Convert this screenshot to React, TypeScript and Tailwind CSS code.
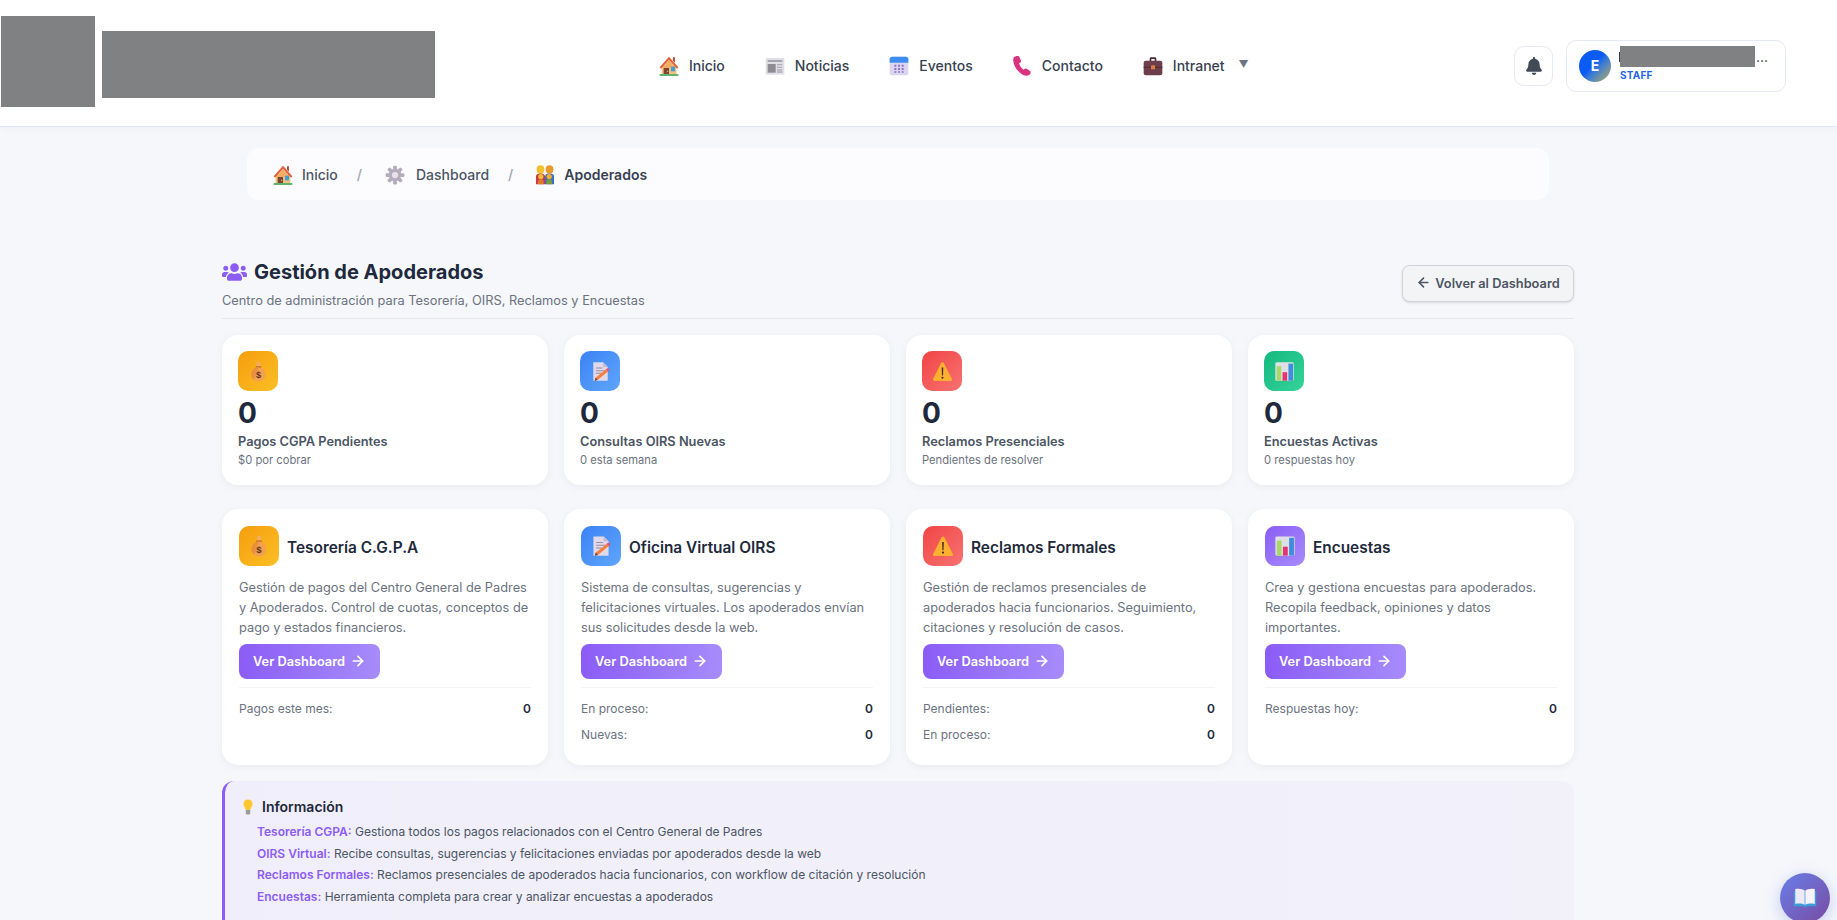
import type { ReactNode } from 'react'
import { FaBell, FaUsers } from 'react-icons/fa'
import { ArrowLeft, ArrowRight } from 'lucide-react'

// emoji-like icons, drawn because no emoji font is installed
function HouseIcon({ className }: { className: string }) {
  return (
    <svg viewBox="1 1 30 30" className={className}>
      <path d="M5 15h22v14H5z" fill="#f3c07b" />
      <path d="M22 3h3v8l-3-3z" fill="#b4523a" />
      <path d="M16 2 2 18l2 2L16 7l12 13 2-2z" fill="#e0603a" />
      <path d="M16 7 6 19h20z" fill="#f3ad61" />
      <path d="M8 19h8v10H8z" fill="#7d4533" />
      <circle cx="14" cy="24" r="1" fill="#f3c07b" />
      <path d="M19 17h6v7h-6z" fill="#3f9fd8" />
      <path d="M2 28h28v3H2z" fill="#5fb56b" />
    </svg>
  )
}

function NewsIcon({ className }: { className: string }) {
  return (
    <svg viewBox="1 1 30 30" className={className}>
      <path d="M2 4h28v25H2z" fill="#e1dfe6" />
      <path d="M5 7h22v3H5z" fill="#a9a5b0" />
      <path d="M5 13h12v13H5z" fill="#8f8c94" />
      <path d="M19 13h8v2h-8zM19 17h8v2h-8zM19 21h8v2h-8zM19 24h8v2h-8z" fill="#b4acbc" />
    </svg>
  )
}

function CalendarIcon({ className }: { className: string }) {
  return (
    <svg viewBox="1 1 30 30" className={className}>
      <rect x="2" y="2" width="28" height="28" rx="4" fill="#dcd5ee" />
      <path d="M2 11V6a4 4 0 0 1 4-4h20a4 4 0 0 1 4 4v5z" fill="#3f8cf0" />
      <path
        d="M9 14h3v3H9zM14.5 14h3v3h-3zM20 14h3v3h-3zM9 19h3v3H9zM14.5 19h3v3h-3zM20 19h3v3h-3zM14.5 24h3v2h-3zM9 24h3v2H9zM20 24h3v2h-3z"
        fill="#8a74c9"
      />
    </svg>
  )
}

function PhoneIcon({ className }: { className: string }) {
  return (
    <svg viewBox="1 1 30 30" className={className}>
      <path
        d="M5 2c-2 1-2.500 4-2 7 1 7 6 16 14 20 3 1.500 6 2 9 1 2-.7 3-3 3-4.500 0-1-.5-1.500-1-2l-5-3.500c-1-.7-2-.5-3 .3l-1.500 1.300c-3-1.500-6-6-7-10l2-1c1-.5 1.300-1.500 1-2.500L12 2.500C11.500 1 10 .5 9 .7z"
        fill="#d9327f"
      />
    </svg>
  )
}

function BriefcaseIcon({ className }: { className: string }) {
  return (
    <svg viewBox="1 1 30 30" className={className}>
      <path d="M11 9V5a2 2 0 0 1 2-2h6a2 2 0 0 1 2 2v4h-2.500V5.500h-5V9z" fill="#4b2d35" />
      <rect x="2" y="8" width="28" height="22" rx="3" fill="#6d3f4a" />
      <path d="M2 17h28v2H2z" fill="#57303a" />
      <rect x="13" y="15" width="6" height="6" rx="1" fill="#d6803c" />
    </svg>
  )
}

function GearIcon({ className }: { className: string }) {
  return (
    <svg viewBox="0 0 32 32" className={className}>
      <g fill="#b4acbc">
        <circle cx="16" cy="16" r="10" />
        <rect x="13" y="1" width="6" height="30" rx="2" />
        <rect x="13" y="1" width="6" height="30" rx="2" transform="rotate(45 16 16)" />
        <rect x="13" y="1" width="6" height="30" rx="2" transform="rotate(90 16 16)" />
        <rect x="13" y="1" width="6" height="30" rx="2" transform="rotate(135 16 16)" />
      </g>
      <circle cx="16" cy="16" r="5" fill="#e6e1ea" />
    </svg>
  )
}

function FamilyIcon({ className }: { className: string }) {
  return (
    <svg viewBox="1 0 30 31" className={className}>
      <ellipse cx="9" cy="7" rx="6" ry="6.5" fill="#f5c02e" />
      <ellipse cx="23" cy="7" rx="6" ry="6.5" fill="#e99a2b" />
      <path d="M2 18a7 5 0 0 1 14 0v12H2z" fill="#c93a4d" />
      <path d="M16 18a7 5 0 0 1 14 0v12H16z" fill="#3b6fc4" />
      <circle cx="9.5" cy="18" r="4" fill="#f5c02e" />
      <circle cx="22.5" cy="18" r="4" fill="#f5b02e" />
      <path d="M5 30v-4a4.500 4 0 0 1 9 0v4z" fill="#e07a2c" />
      <path d="M18 30v-4a4.500 4 0 0 1 9 0v4z" fill="#7a9c3a" />
    </svg>
  )
}

function MoneyBagIcon({ className }: { className: string }) {
  return (
    <svg viewBox="0 0 32 32" className={className}>
      <circle cx="16" cy="4.5" r="3.5" fill="#f3ad61" />
      <path d="M12.500 8h7l1 3h-9z" fill="#b5672e" />
      <circle cx="16" cy="20.5" r="11" fill="#f3a14f" />
      <path d="M16 9.500a11 11 0 0 0-8 18.600c4-3 5-11 8-18.600z" fill="#e98f3d" />
      <text x="16" y="26" textAnchor="middle" fontSize="14" fontWeight="700" fill="#5b3322" fontFamily="Liberation Sans, sans-serif">$</text>
    </svg>
  )
}

function DocPencilIcon({ className }: { className: string }) {
  return (
    <svg viewBox="0 0 32 32" className={className}>
      <path d="M5 2h15l7 7v21H5z" fill="#e1d8ec" />
      <path d="M20 2l7 7h-7z" fill="#c4b8d2" />
      <path d="M9 10h10v1.500H9zM9 14h14v1.500H9zM9 18h9v1.500H9z" fill="#998ea4" />
      <path d="M7 30l1.500-4.500L24 13l3 3.500L11.500 29z" fill="#f4803a" />
      <path d="M24 13l1.500-1.300c1-.8 1.800-.8 2.700 0l.6.7c.8 1 .7 1.900-.3 2.700L27 16.500z" fill="#f0506a" />
      <path d="M7 30l1.500-4.500 3 3.500z" fill="#5b4a52" />
    </svg>
  )
}

function WarningIcon({ className }: { className: string }) {
  return (
    <svg viewBox="0 0 32 32" className={className}>
      <path d="M16 2c1 0 1.800.5 2.300 1.500l12 24c.8 1.500-.3 3-1.800 3H3.500c-1.500 0-2.600-1.500-1.800-3l12-24C14.200 2.500 15 2 16 2z" fill="#ffb02e" />
      <path d="M14.800 10h2.400l-.4 12h-1.600z" fill="#402a32" />
      <circle cx="16" cy="25.500" r="1.600" fill="#402a32" />
    </svg>
  )
}

function ChartIcon({ className }: { className: string }) {
  return (
    <svg viewBox="0 0 32 32" className={className}>
      <rect x="2" y="2" width="28" height="28" rx="2" fill="#e1dfe6" />
      <path d="M4 8h7v22H4z" fill="#a6d86a" />
      <path d="M13 17h7v13h-7z" fill="#e5336d" />
      <path d="M22 4h7v26h-7z" fill="#3f8cdf" />
    </svg>
  )
}

function BulbIcon({ className }: { className: string }) {
  return (
    <svg viewBox="0 0 20 32" className={className}>
      <path d="M10 1C4.500 1 1 5 1 10c0 5 4 7 4.500 12h9C15 17 19 15 19 10c0-5-3.500-9-9-9z" fill="#fcc72e" />
      <path d="M5.500 22h9v6a3 3 0 0 1-3 3h-3a3 3 0 0 1-3-3z" fill="#9b9b9b" />
    </svg>
  )
}

function BookIcon({ className }: { className: string }) {
  return (
    <svg viewBox="0 0 32 32" className={className}>
      <path d="M1 7h30v20H18l-2 1.500L14 27H1z" fill="#3f9bd8" />
      <path d="M3 4c5-1 10 0 12.500 2v19C13 23.500 8 23 3 24z" fill="#efe9f7" />
      <path d="M29 4c-5-1-10 0-12.500 2v19c2.500-1.500 7.500-2 12.500-1z" fill="#f6f2fb" />
    </svg>
  )
}

const NAV: { label: string; icon: ReactNode; space: string }[] = [
  { label: 'Inicio', icon: <HouseIcon className="w-5 h-5" />, space: 'mr-10' },
  { label: 'Noticias', icon: <NewsIcon className="w-5 h-5" />, space: 'mr-10' },
  { label: 'Eventos', icon: <CalendarIcon className="w-5 h-5" />, space: 'mr-[39px]' },
  { label: 'Contacto', icon: <PhoneIcon className="w-5 h-5" />, space: 'mr-10' },
  { label: 'Intranet', icon: <BriefcaseIcon className="w-5 h-5" />, space: 'mr-[14px]' },
]

const STATS = [
  { icon: MoneyBagIcon, bg: 'bg-gradient-to-br from-[#f59e0b] to-[#fbbf24]', value: '0', label: 'Pagos CGPA Pendientes', sub: '$0 por cobrar' },
  { icon: DocPencilIcon, bg: 'bg-gradient-to-br from-[#3b82f6] to-[#60a5fa]', value: '0', label: 'Consultas OIRS Nuevas', sub: '0 esta semana' },
  { icon: WarningIcon, bg: 'bg-gradient-to-br from-[#ef4444] to-[#f87171]', value: '0', label: 'Reclamos Presenciales', sub: 'Pendientes de resolver' },
  { icon: ChartIcon, bg: 'bg-gradient-to-br from-[#10b981] to-[#34d399]', value: '0', label: 'Encuestas Activas', sub: '0 respuestas hoy' },
]

const MODULES = [
  {
    icon: MoneyBagIcon,
    bg: 'bg-gradient-to-br from-[#f59e0b] to-[#fbbf24]',
    title: 'Tesorería C.G.P.A',
    desc: 'Gestión de pagos del Centro General de Padres y Apoderados. Control de cuotas, conceptos de pago y estados financieros.',
    rows: [{ label: 'Pagos este mes:', value: '0' }],
  },
  {
    icon: DocPencilIcon,
    bg: 'bg-gradient-to-br from-[#3b82f6] to-[#60a5fa]',
    title: 'Oficina Virtual OIRS',
    desc: 'Sistema de consultas, sugerencias y felicitaciones virtuales. Los apoderados envían sus solicitudes desde la web.',
    rows: [{ label: 'En proceso:', value: '0' }, { label: 'Nuevas:', value: '0' }],
  },
  {
    icon: WarningIcon,
    bg: 'bg-gradient-to-br from-[#ef4444] to-[#f87171]',
    title: 'Reclamos Formales',
    desc: 'Gestión de reclamos presenciales de apoderados hacia funcionarios. Seguimiento, citaciones y resolución de casos.',
    rows: [{ label: 'Pendientes:', value: '0' }, { label: 'En proceso:', value: '0' }],
  },
  {
    icon: ChartIcon,
    bg: 'bg-gradient-to-br from-[#8b5cf6] to-[#a78bfa]',
    title: 'Encuestas',
    desc: 'Crea y gestiona encuestas para apoderados. Recopila feedback, opiniones y datos importantes.',
    rows: [{ label: 'Respuestas hoy:', value: '0' }],
  },
]

const INFO = [
  { label: 'Tesorería CGPA:', text: 'Gestiona todos los pagos relacionados con el Centro General de Padres' },
  { label: 'OIRS Virtual:', text: 'Recibe consultas, sugerencias y felicitaciones enviadas por apoderados desde la web' },
  { label: 'Reclamos Formales:', text: 'Reclamos presenciales de apoderados hacia funcionarios, con workflow de citación y resolución' },
  { label: 'Encuestas:', text: 'Herramienta completa para crear y analizar encuestas a apoderados' },
]

function Header() {
  return (
    <header className="h-[127px] bg-white border-b border-[#e3e7f3] flex items-center pl-px pt-[6px] shadow-[0_2px_8px_rgba(0,0,0,0.03)]">
      {/* logo, tapado en la captura */}
      <div className="w-[94px] h-[91px] bg-[#808182] -mt-[10px]" />
      <div className="w-[333px] h-[67px] bg-[#808182] ml-[7px] -mt-[4px]" />

      <nav className="flex items-center ml-[224px]">
        {NAV.map((item) => (
          <a key={item.label} className={`flex items-center gap-[10px] text-sm font-medium text-[#374151] ${item.space}`}>
            {item.icon}
            {item.label}
          </a>
        ))}
        <span className="text-[#6b7280] text-[10px] leading-none -mt-[4px]">▼</span>
      </nav>

      <button className="ml-auto w-[39px] h-10 rounded-[10px] border border-[#e5e8f5] bg-white flex items-center justify-center">
        <FaBell className="w-4 h-[18px] text-[#414a55]" />
      </button>
      <div className="ml-[13px] mr-[51px] w-[220px] h-[52px] rounded-[10px] border border-[#e5e8f5] bg-white flex items-center pl-3">
        <div className="w-8 h-8 rounded-full bg-gradient-to-br from-[#0b5cf5] from-45% to-[#b5a83a] text-white text-sm font-bold flex items-center justify-center shrink-0">
          E
        </div>
        <div className="ml-[9px] relative w-[150px] -mt-[5px]">
          <span className="absolute -left-px top-[6px] w-px h-[10px] bg-[#374151]" />
          <div className="flex items-end h-[21px]">
            <div className="w-[135px] h-[21px] bg-[#808182]" />
            <span className="text-sm leading-none text-[#374151] mb-[3px] ml-px">...</span>
          </div>
          <div className="text-[10px] leading-[12px] font-bold text-[#2563eb] tracking-[0.02em] mt-[2px]">STAFF</div>
        </div>
      </div>
    </header>
  )
}

function Breadcrumb() {
  return (
    <div className="ml-[247px] mt-[21px] w-[1302px] h-[52px] rounded-xl bg-[#fcfcfe] flex items-center pl-[26px] pt-[2px] text-sm font-medium text-[#4b5563]">
      <HouseIcon className="w-5 h-5" />
      <span className="ml-[9px]">Inicio</span>
      <span className="ml-[19px] text-[#9ca3af]">/</span>
      <GearIcon className="w-5 h-5 ml-[23px]" />
      <span className="ml-[11px]">Dashboard</span>
      <span className="ml-[19px] text-[#9ca3af]">/</span>
      <FamilyIcon className="w-5 h-5 ml-[22px]" />
      <span className="ml-[9px] font-semibold text-[#374151]">Apoderados</span>
    </div>
  )
}

export default function App() {
  return (
    <div className="relative h-[920px] overflow-hidden bg-[#f5f7fb] font-['Inter',sans-serif]">
      <Header />
      <Breadcrumb />

      <main className="ml-[222px] w-[1352px] mt-[61px]">
        {/* encabezado */}
        <div className="flex justify-between items-start border-b border-[#e5e7eb] pb-[7px]">
          <div>
            <h1 className="flex items-center gap-[7px] text-[20px] leading-[22px] font-bold text-[#1e293b]">
              <FaUsers className="w-[25px] h-[20px] text-[#8b5cf6]" />
              Gestión de Apoderados
            </h1>
            <p className="mt-2 text-[12.8px] leading-5 text-[#6b7280]">
              Centro de administración para Tesorería, OIRS, Reclamos y Encuestas
            </p>
          </div>
          <button className="mt-1 w-[172px] h-[37px] rounded-lg border border-[#d1d5db] bg-[#f3f4f6] shadow-sm flex items-center justify-center gap-1 text-[12.8px] font-semibold text-[#4b5563]">
            <ArrowLeft className="w-[15px] h-[15px] -mt-[2px]" strokeWidth={2.5} />
            Volver al Dashboard
          </button>
        </div>

        {/* estadisticas */}
        <div className="grid grid-cols-4 gap-4 mt-4">
          {STATS.map((s) => (
            <div key={s.label} className="bg-white rounded-2xl p-4 pb-[17px] shadow-[0_2px_8px_rgba(0,0,0,0.05)]">
              <div className={`w-10 h-10 rounded-[10px] flex items-center justify-center ${s.bg}`}>
                <s.icon className="w-[21px] h-[21px]" />
              </div>
              <div className="mt-[6px] text-[28px] leading-8 font-bold text-[#1e293b]">{s.value}</div>
              <div className="mt-[3px] text-[12.8px] leading-5 font-semibold text-[#4b5563]">{s.label}</div>
              <div className="text-[11.2px] leading-4 text-[#6b7280]">{s.sub}</div>
            </div>
          ))}
        </div>

        {/* modulos */}
        <div className="grid grid-cols-4 gap-4 mt-6">
          {MODULES.map((m) => (
            <div key={m.title} className="bg-white rounded-2xl p-[17px] h-[256px] shadow-[0_2px_8px_rgba(0,0,0,0.05)]">
              <div className="flex items-center gap-2">
                <div className={`w-10 h-10 rounded-[10px] flex items-center justify-center ${m.bg}`}>
                  <m.icon className="w-[22px] h-[22px]" />
                </div>
                <h3 className="text-[15.4px] font-semibold text-[#1e293b] mt-[3px]">{m.title}</h3>
              </div>
              <p className="mt-3 text-[12.8px] leading-5 text-[#6b7280]">{m.desc}</p>
              <button className="mt-[6px] w-[141px] h-[35px] rounded-lg bg-gradient-to-r from-[#8b5cf6] to-[#a78bfa] text-white text-[12.8px] font-semibold flex items-center justify-center gap-[5px]">
                Ver Dashboard
                <ArrowRight className="w-4 h-4 -mt-[2px]" strokeWidth={2.5} />
              </button>
              <div className="mt-2 border-t border-[#f3f4f6] pt-[11px] flex flex-col gap-[6px]">
                {m.rows.map((r) => (
                  <div key={r.label} className="flex justify-between text-xs leading-5 text-[#6b7280]">
                    <span>{r.label}</span>
                    <span className="font-semibold text-[#1e293b]">{r.value}</span>
                  </div>
                ))}
              </div>
            </div>
          ))}
        </div>

        {/* informacion */}
        <div className="mt-4 h-[170px] rounded-xl border-l-[3px] border-[#8b5cf6] bg-gradient-to-r from-[#f0eefa] to-[#f2f1fa] pl-[18px] pt-4">
          <div className="flex items-center gap-[9px] text-sm leading-5 font-semibold text-[#1e293b]">
            <BulbIcon className="w-[10px] h-[18px]" />
            Información
          </div>
          <ul className="mt-1 ml-[14px] text-xs leading-[21.7px] text-[#4b5563]">
            {INFO.map((i) => (
              <li key={i.label}>
                <strong className="font-semibold text-[#8b5cf6]">{i.label}</strong> {i.text}
              </li>
            ))}
          </ul>
        </div>
      </main>

      {/* boton flotante */}
      <button className="absolute right-[7px] bottom-[-3px] w-[50px] h-[50px] rounded-full bg-gradient-to-br from-[#667eea] to-[#764ba2] shadow-[0_4px_15px_rgba(102,126,234,0.35)] flex items-center justify-center">
        <BookIcon className="w-6 h-6" />
      </button>
    </div>
  )
}
